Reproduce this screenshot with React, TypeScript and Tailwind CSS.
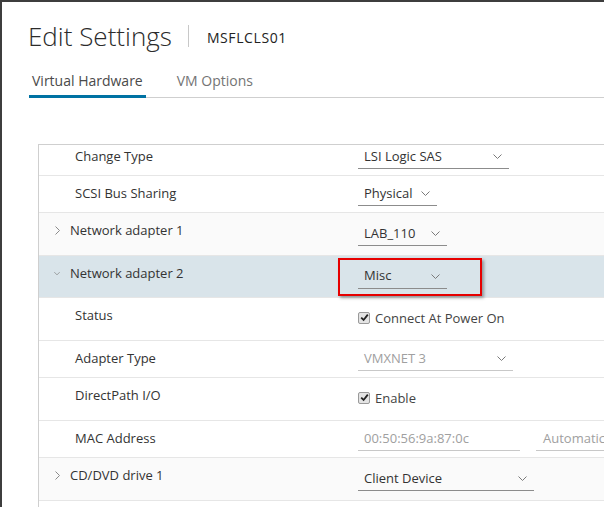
import type { ReactNode } from 'react';

const FONT = "font-['Open_Sans','Liberation_Sans',sans-serif]";

function ChevronDown({ className = '' }: { className?: string }) {
  return (
    <svg width="9" height="5" viewBox="0 0 9 5" className={className} fill="none">
      <path d="M0.5 0.5 L4.5 4.5 L8.5 0.5" stroke="#7a7a7a" strokeWidth="1" />
    </svg>
  );
}

function ChevronRight() {
  return (
    <svg width="5" height="9" viewBox="0 0 5 9" fill="none">
      <path d="M0.5 0.5 L4.5 4.5 L0.5 8.5" stroke="#8a8a8a" strokeWidth="1" />
    </svg>
  );
}

function Select({ value, width, disabled = false }: { value: string; width: number; disabled?: boolean }) {
  return (
    <div
      className={
        'flex h-[24px] items-center justify-between border-b pl-[6px] pr-[7px] text-[13px] ' +
        (disabled ? 'border-[#c8c8c8] text-[#a0a0a0]' : 'border-[#8c8c8c] text-[#333]')
      }
      style={{ width }}
    >
      <span>{value}</span>
      <ChevronDown />
    </div>
  );
}

function Check({ label }: { label: string }) {
  return (
    <div className="flex items-center gap-[5px] text-[13px] text-[#444]">
      <span className="mb-[3px] flex h-[12px] w-[12px] items-center justify-center rounded-[2px] border border-[#9a9a9a] bg-[#e4e4e4]">
        <svg width="9" height="9" viewBox="0 0 9 9" fill="none">
          <path d="M1.2 4.6 L3.6 7 L7.8 1.6" stroke="#222" strokeWidth="1.8" />
        </svg>
      </span>
      <span>{label}</span>
    </div>
  );
}

type Row = {
  label: string;
  kind: 'group' | 'item';
  open?: boolean;
  h: number;
  bg?: string;
  control: ReactNode;
  mark?: boolean;
};

const ROWS: Row[] = [
  { label: 'Change Type', kind: 'item', h: 37, control: <Select value="LSI Logic SAS" width={151} /> },
  { label: 'SCSI Bus Sharing', kind: 'item', h: 37, control: <Select value="Physical" width={79} /> },
  { label: 'Network adapter 1', kind: 'group', h: 43, bg: 'bg-[#fafafa]', control: <Select value="LAB_110" width={89} /> },
  {
    label: 'Network adapter 2',
    kind: 'group',
    open: true,
    h: 42,
    bg: 'bg-[#d9e4ea]',
    control: <Select value="Misc" width={89} />,
    mark: true,
  },
  { label: 'Status', kind: 'item', h: 43, control: <Check label="Connect At Power On" /> },
  { label: 'Adapter Type', kind: 'item', h: 37, control: <Select value="VMXNET 3" width={155} disabled /> },
  { label: 'DirectPath I/O', kind: 'item', h: 43, control: <Check label="Enable" /> },
  {
    label: 'MAC Address',
    kind: 'item',
    h: 37,
    control: (
      <div className="flex items-center gap-[16px] text-[13px] text-[#a0a0a0]">
        <div className="flex h-[24px] w-[162px] items-center border-b border-[#c8c8c8] pl-[6px]">00:50:56:9a:87:0c</div>
        <div className="flex h-[24px] w-[120px] items-center border-b border-[#c8c8c8] pl-[7px]">Automatic</div>
      </div>
    ),
  },
  { label: 'CD/DVD drive 1', kind: 'group', h: 43, bg: 'bg-[#fafafa]', control: <Select value="Client Device" width={176} /> },
];

export default function App() {
  return (
    <div className={`h-[507px] w-[604px] overflow-hidden border-l-2 border-t-2 border-[#3d3d3d] bg-white ${FONT}`}>
      <div className="flex items-center pl-[26px] pt-[18px]">
        <h1 className="text-[26px] font-light leading-[32px] text-[#2b2b2b]">Edit Settings</h1>
        <div className="ml-[16px] h-[22px] w-px bg-[#c8c8c8]" />
        <span className="ml-[18px] pt-[2px] text-[14px] font-medium tracking-[0.6px] text-[#222]">MSFLCLS01</span>
      </div>

      <div className="ml-[27px] mt-[18px] flex border-b border-[#cfcfcf]">
        <div className="mb-[-1px] border-b-[3px] border-[#0072a3] px-[3px] pb-[4px] text-[14px] text-[#4a4a4a]">
          Virtual Hardware
        </div>
        <div className="ml-[28px] px-[3px] pb-[4px] text-[14px] text-[#747474]">VM Options</div>
      </div>

      <div className="ml-[36px] mt-[46px] overflow-hidden border-l border-t border-[#cfcfcf]">
        <div className="-mt-[6px]">
          {ROWS.map((r) => (
            <div
              key={r.label}
              className={`flex border-b border-[#e6e6e6] ${r.bg ?? ''}`}
              style={{ height: r.h }}
            >
              <div
                className={`flex w-[319px] shrink-0 items-center self-start pt-[7px] text-[13px] leading-[20px] text-[#333] ${
                  r.kind === 'group' ? 'pl-[15px]' : 'pl-[36px]'
                }`}
              >
                {r.kind === 'group' && (
                  <span className="mr-[10px] flex w-[6px] justify-center">
                    {r.open ? <ChevronDown /> : <ChevronRight />}
                  </span>
                )}
                {r.label}
              </div>
              <div className="relative flex items-center">
                {r.control}
                {r.mark && (
                  <div className="absolute left-[-20px] top-[2px] h-[38px] w-[144px] border-2 border-[#e60000] shadow-[2px_2px_3px_rgba(0,0,0,0.35)]" />
                )}
              </div>
            </div>
          ))}
          <div className="h-[43px]" />
        </div>
      </div>
    </div>
  );
}
